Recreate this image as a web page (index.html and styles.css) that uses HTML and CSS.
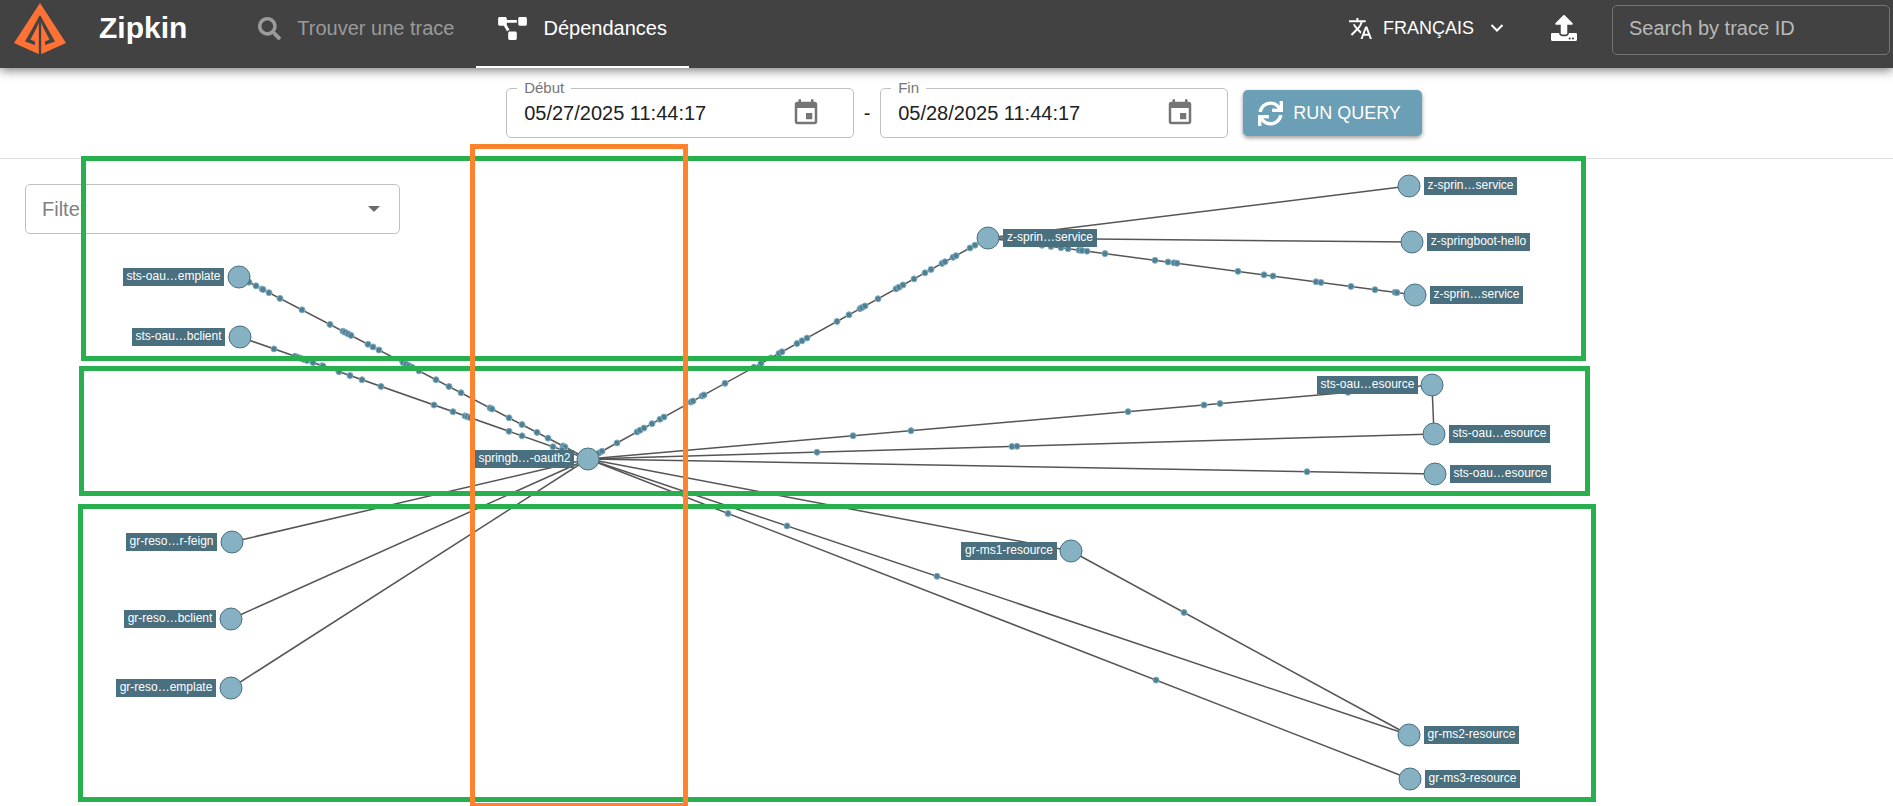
FILE: index.html
```html
<!DOCTYPE html>
<html lang="fr">
<head>
<meta charset="utf-8">
<meta name="viewport" content="width=device-width, initial-scale=1">
<title>Zipkin - Dépendances</title>
<link rel="stylesheet" href="styles.css">
</head>
<body>
<header class="topbar">
  <svg class="logo" viewBox="0 0 54 54" aria-hidden="true">
    <path fill="#ff7236" d="M27 2 53 42 28.500 53V17L41.500 40 32 43.500V40L36.500 38.500 30.500 27V53L28.500 53V16H25.500V53L1 42Z"/>
    <path fill="#424242" d="M27 14 42 40.500 32 44V40.500L36.500 38.500 30.500 27V53.500H28.500V20H25.500V53.500H23.500V27L17.500 38.500 22 40.500V44L12 40.500Z"/>
    <path fill="#424242" d="M25.800 18H28.200V54H25.800Z"/>
    <path fill="#ff7236" d="M23 28 25.800 22V53L23 51.800ZM31 28 28.200 22V53L31 51.800Z"/>
  </svg>
  <h1 class="brand">Zipkin</h1>
  <nav class="tabs">
    <a class="tab" href="#traces">
      <svg class="icon-search" viewBox="0 0 512 512" aria-hidden="true"><path d="M505 442.700L405.300 343c-4.500-4.500-10.600-7-17-7H372c27.600-35.300 44-79.700 44-128C416 93.100 322.900 0 208 0S0 93.100 0 208s93.100 208 208 208c48.300 0 92.700-16.400 128-44v16.300c0 6.400 2.500 12.500 7 17l99.700 99.700c9.400 9.400 24.600 9.400 33.900 0l28.300-28.300c9.400-9.400 9.400-24.600.1-34zM208 336c-70.700 0-128-57.200-128-128 0-70.700 57.200-128 128-128 70.700 0 128 57.200 128 128 0 70.700-57.200 128-128 128z"/></svg>
      <span>Trouver une trace</span>
    </a>
    <a class="tab tab-active" href="#dependencies" aria-current="page">
      <svg class="icon-diagram" viewBox="0 0 640 512" aria-hidden="true"><path d="M384 320H256c-17.670 0-32 14.330-32 32v128c0 17.670 14.330 32 32 32h128c17.670 0 32-14.330 32-32V352c0-17.670-14.330-32-32-32zM192 32c0-17.670-14.330-32-32-32H32C14.330 0 0 14.330 0 32v128c0 17.670 14.330 32 32 32h95.720l73.160 128.040C211.980 300.980 232.400 288 256 288h.28L192 175.510V128h224V64H192V32zM608 0H480c-17.670 0-32 14.330-32 32v128c0 17.670 14.330 32 32 32h128c17.670 0 32-14.330 32-32V32c0-17.670-14.330-32-32-32z"/></svg>
      <span>Dépendances</span>
    </a>
  </nav>
  <div class="tools">
    <button class="language" type="button">
      <svg class="icon-translate" viewBox="0 0 24 24" aria-hidden="true"><path d="M12.870 15.070l-2.540-2.510.03-.03c1.740-1.940 2.980-4.170 3.710-6.530H17V4h-7V2H8v2H1v1.990h11.170C11.500 7.920 10.440 9.750 9 11.350 8.070 10.320 7.300 9.190 6.690 8h-2c.73 1.630 1.730 3.170 2.980 4.560l-5.090 5.020L4 19l5-5 3.110 3.110.76-2.040zM18.500 10h-2L12 22h2l1.120-3h4.750L21 22h2l-4.500-12zm-2.620 7l1.620-4.330L19.120 17h-3.240z"/></svg>
      <span>FRANÇAIS</span>
      <svg class="icon-chevron" viewBox="0 0 14 10" aria-hidden="true"><path d="M1.500 2 7 7.500 12.500 2" fill="none" stroke="currentColor" stroke-width="2"/></svg>
    </button>
    <button class="upload" type="button" aria-label="Upload">
      <svg class="icon-upload" viewBox="0 0 512 512" aria-hidden="true"><path d="M296 384h-80c-13.300 0-24-10.700-24-24V192h-87.700c-17.800 0-26.700-21.500-14.100-34.100L242.300 5.700c7.500-7.500 19.800-7.500 27.300 0l152.200 152.200c12.600 12.600 3.700 34.100-14.100 34.100H320v168c0 13.300-10.700 24-24 24zm216-8v112c0 13.300-10.700 24-24 24H24c-13.300 0-24-10.700-24-24V376c0-13.300 10.700-24 24-24h136v8c0 30.900 25.100 56 56 56h80c30.900 0 56-25.100 56-56v-8h136c13.300 0 24 10.700 24 24zm-124 88c0-11-9-20-20-20s-20 9-20 20 9 20 20 20 20-9 20-20zm64 0c0-11-9-20-20-20s-20 9-20 20 9 20 20 20 20-9 20-20z"/></svg>
    </button>
    <input class="trace-search" type="text" placeholder="Search by trace ID" aria-label="Search by trace ID">
  </div>
</header>

<form class="query">
  <div class="field">
    <label class="field-label" for="start">Début</label>
    <input class="field-input" id="start" type="text" value="05/27/2025 11:44:17">
    <button class="field-button" type="button" aria-label="Choisir le début">
      <svg class="icon-calendar" viewBox="0 0 24 24" aria-hidden="true"><path d="M17 12h-5v5h5v-5zM16 1v2H8V1H6v2H5c-1.110 0-1.990.9-1.990 2L3 19c0 1.100.89 2 2 2h14c1.100 0 2-.9 2-2V5c0-1.100-.9-2-2-2h-1V1h-2zm3 18H5V8h14v11z"/></svg>
    </button>
  </div>
  <span class="dash">-</span>
  <div class="field">
    <label class="field-label" for="end">Fin</label>
    <input class="field-input" id="end" type="text" value="05/28/2025 11:44:17">
    <button class="field-button" type="button" aria-label="Choisir la fin">
      <svg class="icon-calendar" viewBox="0 0 24 24" aria-hidden="true"><path d="M17 12h-5v5h5v-5zM16 1v2H8V1H6v2H5c-1.110 0-1.990.9-1.990 2L3 19c0 1.100.89 2 2 2h14c1.100 0 2-.9 2-2V5c0-1.100-.9-2-2-2h-1V1h-2zm3 18H5V8h14v11z"/></svg>
    </button>
  </div>
  <button class="run" type="button">
    <svg class="icon-sync" viewBox="0 0 512 512" aria-hidden="true"><path d="M440.650 12.570l4 82.770A247.160 247.160 0 0 0 255.830 8C134.730 8 33.910 94.920 12.290 209.820A12 12 0 0 0 24.090 224h49.050a12 12 0 0 0 11.670-9.260 175.910 175.910 0 0 1 317-56.940l-101.460-4.860a12 12 0 0 0-12.570 12v47.410a12 12 0 0 0 12 12H500a12 12 0 0 0 12-12V12a12 12 0 0 0-12-12h-47.370a12 12 0 0 0-11.980 12.570zM255.830 432a175.610 175.610 0 0 1-146-77.800l101.800 4.870a12 12 0 0 0 12.570-12v-47.400a12 12 0 0 0-12-12H12a12 12 0 0 0-12 12V500a12 12 0 0 0 12 12h47.350a12 12 0 0 0 12-12.600l-4.150-82.570A247.170 247.170 0 0 0 255.830 504c121.110 0 221.930-86.920 243.550-201.820a12 12 0 0 0-11.800-14.180h-49.050a12 12 0 0 0-11.670 9.260A175.860 175.860 0 0 1 255.830 432z"/></svg>
    <span>RUN QUERY</span>
  </button>
</form>

<main class="graph">
  <div class="filter">
    <select class="filter-select" aria-label="Filter">
      <option>Filter</option>
    </select>
    <svg class="filter-arrow" viewBox="0 0 12 6" aria-hidden="true"><path d="M0 0H12L6 6Z"/></svg>
  </div>
  <svg class="canvas" id="canvas" viewBox="0 159 1893 647" preserveAspectRatio="xMidYMin meet" role="img" aria-label="Graphe des dépendances">
    <g id="links"></g>
    <g id="particles"></g>
    <g id="nodes"></g>
    <g class="zones">
      <rect class="zone" x="83.500" y="158.500" width="1500" height="200"/>
      <rect class="zone" x="81.500" y="368.500" width="1506" height="125"/>
      <rect class="zone" x="80.500" y="506.500" width="1513" height="293"/>
      <rect class="zone zone-hub" x="472.500" y="146.500" width="213" height="659"/>
    </g>
  </svg>
</main>
<script src="graph.js"></script>
</body>
</html>
```
FILE: styles.css
```css
* {
  box-sizing: border-box;
}

body {
  margin: 0;
  min-height: 100vh;
  display: flex;
  flex-direction: column;
  overflow: hidden;
  background: #fff;
  color: #212121;
  font-family: "Liberation Sans", Arial, sans-serif;
  font-size: 20px;
}

button,
input,
select {
  font: inherit;
  color: inherit;
}

button {
  border: 0;
  padding: 0;
  background: none;
}

svg {
  display: block;
  fill: currentColor;
}

.topbar {
  position: relative;
  z-index: 1;
  display: flex;
  height: 68px;
  padding: 0 3px 0 13px;
  background: #424242;
  color: #fff;
  box-shadow: 0 2px 10px rgba(0, 0, 0, 0.55);
}

.logo {
  width: 54px;
  height: 54px;
  margin-top: 1px;
}

.brand {
  margin: 0 49px 0 32px;
  font-size: 30px;
  line-height: 55px;
}

.tabs {
  display: flex;
}

.tab {
  display: flex;
  align-items: center;
  gap: 16px;
  padding: 0 22px 10px;
  border-bottom: 2px solid transparent;
  color: #9b9b9b;
  text-decoration: none;
}

.tab-active {
  border-bottom-color: #fff;
  color: #fff;
}

.icon-search {
  width: 23px;
  height: 23px;
}

.icon-diagram {
  width: 29px;
  height: 23px;
}

.tools {
  display: flex;
  align-items: center;
  margin-left: auto;
  padding-bottom: 12px;
}

.language {
  display: flex;
  align-items: center;
  gap: 10px;
  font-size: 18px;
}

.icon-translate {
  width: 25px;
  height: 25px;
}

.icon-chevron {
  width: 14px;
  height: 10px;
  margin-left: 6px;
}

.upload {
  margin: 0 35px 0 47px;
}

.icon-upload {
  width: 26px;
  height: 26px;
}

.trace-search {
  width: 278px;
  height: 50px;
  margin-top: 4px;
  padding: 0 16px 4px;
  border: 1px solid #737373;
  border-radius: 5px;
  background: transparent;
}

.trace-search::placeholder {
  color: #b9b9b9;
  opacity: 1;
}

.query {
  display: flex;
  justify-content: center;
  align-items: center;
  padding: 20px 0 20px 35px;
  border-bottom: 1px solid #dcdcdc;
}

.field {
  position: relative;
  display: flex;
  align-items: center;
  width: 348px;
  height: 50px;
  padding: 0 32px 0 17px;
  border: 1px solid #c0c0c0;
  border-radius: 5px;
}

.field-label {
  position: absolute;
  top: -10px;
  left: 10px;
  padding: 0 7px;
  background: #fff;
  color: #757575;
  font-size: 15px;
  line-height: 18px;
}

.field-input {
  flex: 1;
  min-width: 0;
  padding: 0;
  border: 0;
  background: none;
}

.icon-calendar {
  width: 30px;
  height: 30px;
  color: #757575;
}

.dash {
  width: 26px;
  text-align: center;
}

.run {
  display: flex;
  align-items: center;
  gap: 10px;
  height: 46px;
  margin-left: 15px;
  padding: 0 21px 0 15px;
  border-radius: 5px;
  background: #6b9fb5;
  box-shadow: 0 2px 4px rgba(0, 0, 0, 0.4);
  color: #fff;
  font-size: 18px;
}

.icon-sync {
  width: 25px;
  height: 25px;
}

.graph {
  position: relative;
  flex: 1;
  padding: 25px;
}

.filter {
  position: relative;
  width: 375px;
}

.filter-select {
  width: 100%;
  height: 50px;
  padding: 0 16px;
  border: 1px solid #c0c0c0;
  border-radius: 5px;
  appearance: none;
  background: #fff;
  color: #808080;
}

.filter-arrow {
  position: absolute;
  top: 22px;
  right: 20px;
  width: 12px;
  height: 6px;
  color: #6b6b6b;
  pointer-events: none;
}

.canvas {
  position: absolute;
  top: 0;
  left: 0;
  width: 100%;
  overflow: visible;
  pointer-events: none;
}

.link {
  stroke: #555;
  stroke-width: 1.5;
}

.particle {
  fill: #4f7f93;
  stroke: #7fadbf;
  stroke-width: 1;
}

.node {
  fill: #85b1c3;
  stroke: #4a7181;
  stroke-width: 1;
}

.node-tag {
  fill: #4a6f7e;
}

.node-name {
  fill: #fff;
  font-size: 12px;
  text-anchor: middle;
}

.zone {
  fill: none;
  stroke: #28b04f;
  stroke-width: 5;
}

.zone-hub {
  stroke: #ff832d;
}
```
FILE: graph.js
```js
const nodes = {
  stsTemplate: { x: 239, y: 277, name: "sts-oau…emplate", tag: 123, width: 101 },
  stsClient: { x: 240, y: 337, name: "sts-oau…bclient", tag: 132, width: 93 },
  hub: { x: 588, y: 459, name: "springb…-oauth2", tag: 475, width: 99 },
  zGateway: { x: 988, y: 238, name: "z-sprin…service", tag: 1003, width: 94 },
  z1: { x: 1409, y: 186, name: "z-sprin…service", tag: 1424, width: 93 },
  z2: { x: 1412, y: 242, name: "z-springboot-hello", tag: 1427, width: 103 },
  z3: { x: 1415, y: 295, name: "z-sprin…service", tag: 1430, width: 93 },
  sts1: { x: 1432, y: 385, name: "sts-oau…esource", tag: 1317, width: 101 },
  sts2: { x: 1434, y: 434, name: "sts-oau…esource", tag: 1449, width: 101 },
  sts3: { x: 1435, y: 474, name: "sts-oau…esource", tag: 1450, width: 101 },
  ms1: { x: 1071, y: 551, name: "gr-ms1-resource", tag: 961, width: 96 },
  ms2: { x: 1409, y: 735, name: "gr-ms2-resource", tag: 1424, width: 95 },
  ms3: { x: 1410, y: 779, name: "gr-ms3-resource", tag: 1425, width: 95 },
  grFeign: { x: 232, y: 542, name: "gr-reso…r-feign", tag: 126, width: 91 },
  grClient: { x: 231, y: 619, name: "gr-reso…bclient", tag: 124, width: 92 },
  grTemplate: { x: 231, y: 688, name: "gr-reso…emplate", tag: 116, width: 100 }
};

// Each link lists the x position of the calls travelling along it.
const links = [
  ["stsTemplate", "hub", [249, 256, 262, 263, 269, 280, 302, 330, 343, 345, 348, 351, 368, 373, 379, 403, 406, 409, 412, 419, 436, 449, 461, 490, 492, 509, 522, 537, 548, 563, 565]],
  ["stsClient", "hub", [274, 295, 298, 301, 304, 307, 313, 322, 323, 339, 350, 362, 381, 434, 453, 465, 467, 470, 509, 522, 553, 562]],
  ["grFeign", "hub", []],
  ["grClient", "hub", []],
  ["grTemplate", "hub", []],
  ["hub", "zGateway", [599, 602, 617, 637, 640, 644, 652, 660, 664, 691, 693, 702, 704, 725, 754, 761, 771, 779, 782, 797, 802, 807, 837, 849, 860, 862, 865, 878, 896, 899, 903, 914, 925, 931, 942, 945, 953, 956, 970, 975]],
  ["hub", "sts1", [853, 911, 1128, 1204, 1220, 1348]],
  ["hub", "sts2", [817, 1012, 1017]],
  ["hub", "sts3", [1307]],
  ["hub", "ms1", []],
  ["hub", "ms2", [787, 937]],
  ["hub", "ms3", [728, 1156]],
  ["ms1", "ms2", [1184]],
  ["sts1", "sts2", []],
  ["zGateway", "z1", []],
  ["zGateway", "z2", []],
  ["zGateway", "z3", [1042, 1051, 1061, 1068, 1079, 1082, 1087, 1105, 1155, 1168, 1174, 1177, 1238, 1264, 1273, 1316, 1321, 1351, 1375, 1395, 1397]]
];

function add(parent, tag, className, attributes) {
  const element = document.createElementNS("http://www.w3.org/2000/svg", tag);
  element.setAttribute("class", className);
  for (const [key, value] of Object.entries(attributes)) {
    element.setAttribute(key, value);
  }
  parent.append(element);
  return element;
}

const linkLayer = document.getElementById("links");
const particleLayer = document.getElementById("particles");
const nodeLayer = document.getElementById("nodes");

for (const [from, to, calls] of links) {
  const a = nodes[from];
  const b = nodes[to];
  add(linkLayer, "line", "link", { x1: a.x, y1: a.y, x2: b.x, y2: b.y });
  for (const x of calls) {
    const y = a.y + ((x - a.x) * (b.y - a.y)) / (b.x - a.x);
    add(particleLayer, "circle", "particle", { cx: x, cy: y, r: 3 });
  }
}

for (const node of Object.values(nodes)) {
  add(nodeLayer, "circle", "node", { cx: node.x, cy: node.y, r: 11 });
  add(nodeLayer, "rect", "node-tag", { x: node.tag, y: node.y - 9, width: node.width, height: 18 });
  const name = add(nodeLayer, "text", "node-name", { x: node.tag + node.width / 2, y: node.y + 3 });
  name.textContent = node.name;
}
```
